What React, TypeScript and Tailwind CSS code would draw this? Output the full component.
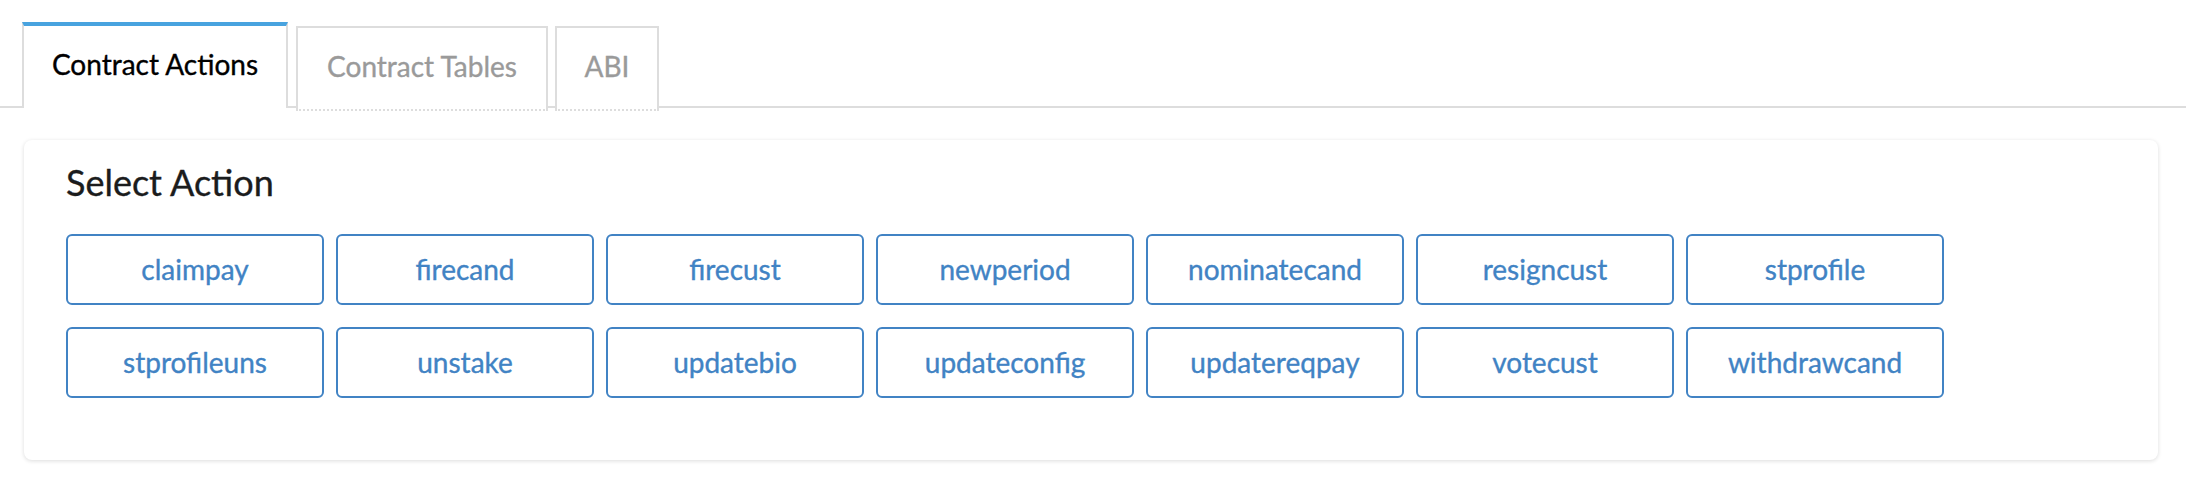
import React, { useState } from 'react';

const actions = [
    'claimpay',
    'firecand',
    'firecust',
    'newperiod',
    'nominatecand',
    'resigncust',
    'stprofile',
    'stprofileuns',
    'unstake',
    'updatebio',
    'updateconfig',
    'updatereqpay',
    'votecust',
    'withdrawcand',
];

export default function App(): JSX.Element {
    const [activeTab, setActiveTab] = useState('actions');

    return (
        <div className="w-full h-[480px] bg-white font-['Lato',sans-serif] [-webkit-text-stroke:0.35px_currentColor] overflow-hidden">
            {/* tabs */}
            <div className="flex items-start h-[108px] pl-[22px] pt-[22px] border-b-2 border-[#dddddd]">
                <button
                    onClick={() => setActiveTab('actions')}
                    className="relative z-10 w-[266px] h-[86px] shrink-0 flex justify-center items-start pt-[22px] bg-white border-x-2 border-x-[#dddddd] border-t-4 border-t-[#48a3df] text-[28px] leading-[1.2] text-black">
                    Contract Actions
                </button>
                <button
                    onClick={() => setActiveTab('tables')}
                    className="relative z-10 ml-[8px] mt-[4px] w-[252px] h-[85px] shrink-0 flex justify-center items-start pt-[22px] bg-white border-2 border-[#dddddd] [border-bottom-style:dotted] text-[28px] leading-[1.2] text-[#9a9a9a]">
                    Contract Tables
                </button>
                <button
                    onClick={() => setActiveTab('abi')}
                    className="relative z-10 ml-[7px] mt-[4px] w-[104px] h-[85px] shrink-0 flex justify-center items-start pt-[22px] bg-white border-2 border-[#dddddd] [border-bottom-style:dotted] text-[28px] leading-[1.2] text-[#9a9a9a]">
                    ABI
                </button>
            </div>

            {/* action card */}
            <div className="mt-[32px] ml-[24px] mr-[28px] h-[320px] rounded-[8px] bg-white shadow-[0_1px_4px_rgba(0,0,0,0.14)] pl-[42px] pt-[20px]">
                <h2 className="text-[36px] leading-[44px] text-[#1b1c1d]">Select Action</h2>
                <div className="mt-[30px] grid grid-cols-[repeat(7,258px)] gap-x-[12px] gap-y-[22px]">
                    {actions.map((name) => (
                        <button
                            key={name}
                            className="h-[71px] flex items-center justify-center rounded-[6px] border-2 border-[#4183c4] bg-white text-[28px] leading-[1.2] text-[#4183c4]">
                            {name}
                        </button>
                    ))}
                </div>
            </div>
        </div>
    );
}
